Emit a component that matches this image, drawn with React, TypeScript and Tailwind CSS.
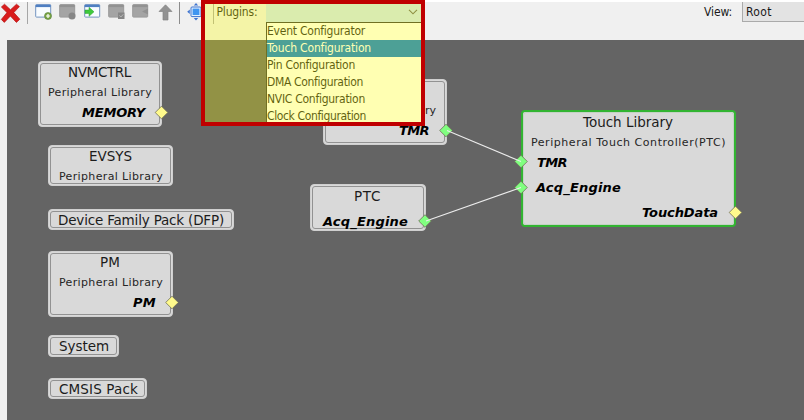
import { useLayoutEffect, useRef } from "react";

type Kind = "title" | "sub" | "port" | "ui";

const kinds: Record<Kind, string> = {
  title: "text-[13.5px] font-normal text-[#1c1c1c]",
  sub: "text-[11px] font-normal text-[#262626]",
  port: "text-[13px] font-bold italic text-black",
  ui: "text-[12px] font-normal",
};

const faces: Record<Kind, string> = {
  title: "font-['DejaVu_Sans',sans-serif]",
  sub: "font-['DejaVu_Sans',sans-serif]",
  port: "font-['DejaVu_Sans',sans-serif]",
  ui: "font-['DejaVu_Sans_Condensed','DejaVu_Sans',sans-serif] [font-stretch:condensed]",
};

/* Distance from the top of a line box to its baseline. */
const ascent: Record<Kind, number> = { title: 13, sub: 11, port: 12, ui: 12 };

/* One line of text whose tracking is adjusted so that it fills `width`. */
function Label({ kind, width, className = "", children }: { kind: Kind; width: number; className?: string; children: string }) {
  const ref = useRef<HTMLSpanElement>(null);
  useLayoutEffect(() => {
    const el = ref.current;
    if (!el) return;
    el.style.letterSpacing = "0px";
    const natural = el.getBoundingClientRect().width;
    el.style.letterSpacing = `${(width - natural) / children.length}px`;
  }, [width, children]);
  return (
    <span ref={ref} className={`block h-4 w-max whitespace-pre leading-4 ${kinds[kind]} ${faces[kind]} ${className}`}>
      {children}
    </span>
  );
}

type Line = { kind: Kind; text: string; x: number; y: number; w: number };
type Node = { x: number; y: number; w: number; h: number; active?: boolean; lines: Line[] };

/* Line coordinates: left edge and baseline on the canvas. */
const nodes: Node[] = [
  { x: 38, y: 61, w: 124, h: 66, lines: [
    { kind: "title", text: "NVMCTRL", x: 68, y: 77, w: 63 },
    { kind: "sub", text: "Peripheral Library", x: 48, y: 96, w: 104 },
    { kind: "port", text: "MEMORY", x: 82, y: 117, w: 63 } ] },
  { x: 48, y: 145, w: 125, h: 41, lines: [
    { kind: "title", text: "EVSYS", x: 89, y: 161, w: 43 },
    { kind: "sub", text: "Peripheral Library", x: 59, y: 180, w: 104 } ] },
  { x: 48, y: 209, w: 186, h: 21, lines: [{ kind: "title", text: "Device Family Pack (DFP)", x: 58, y: 225, w: 166 }] },
  { x: 48, y: 251, w: 125, h: 66, lines: [
    { kind: "title", text: "PM", x: 100, y: 267, w: 20 },
    { kind: "sub", text: "Peripheral Library", x: 59, y: 286, w: 104 },
    { kind: "port", text: "PM", x: 133, y: 307, w: 23 } ] },
  { x: 48, y: 335, w: 71, h: 22, lines: [{ kind: "title", text: "System", x: 59, y: 351, w: 50 }] },
  { x: 48, y: 378, w: 99, h: 21, lines: [{ kind: "title", text: "CMSIS Pack", x: 59, y: 394, w: 79 }] },
  { x: 323, y: 79, w: 124, h: 66, lines: [
    { kind: "sub", text: "ry", x: 425, y: 114, w: 11 },
    { kind: "port", text: "TMR", x: 399, y: 135, w: 30 } ] },
  { x: 310, y: 184, w: 116, h: 47, lines: [
    { kind: "title", text: "PTC", x: 354, y: 201, w: 27 },
    { kind: "port", text: "Acq_Engine", x: 323, y: 226, w: 85 } ] },
  { x: 521, y: 110, w: 215, h: 117, active: true, lines: [
    { kind: "title", text: "Touch Library", x: 583, y: 127, w: 90 },
    { kind: "sub", text: "Peripheral Touch Controller(PTC)", x: 531, y: 146, w: 195 },
    { kind: "port", text: "TMR", x: 537, y: 167, w: 30 },
    { kind: "port", text: "Acq_Engine", x: 536, y: 192, w: 85 },
    { kind: "port", text: "TouchData", x: 642, y: 217, w: 76 } ] },
];

const ports = [
  { x: 161.5, y: 112.5, fill: "#fffa8c" },
  { x: 172, y: 302.5, fill: "#fffa8c" },
  { x: 735.5, y: 212.5, fill: "#fffa8c" },
  { x: 446, y: 130.5, fill: "#80ff80" },
  { x: 425, y: 221, fill: "#80ff80" },
  { x: 521, y: 161.5, fill: "#80ff80" },
  { x: 521, y: 187.5, fill: "#80ff80" },
];

function NodeBox({ node }: { node: Node }) {
  return (
    <div
      className={`absolute rounded-[4px] bg-[#d9d9d9] ${node.active ? "border-2 border-[#32b432]" : "border border-[#cfcfcf]"}`}
      style={{ left: node.x, top: node.y, width: node.w, height: node.h }}
    >
      <div className={`absolute inset-0 rounded-[3px] border ${node.active ? "border-[#c4d2c4]" : "m-px border-[#929292]"}`} />
      {node.lines.map((l) => {
        const b = node.active ? 2 : 1;
        return (
          <div key={l.text} className="absolute" style={{ left: l.x - node.x - b, top: l.y - node.y - b - ascent[l.kind] }}>
            <Label kind={l.kind} width={l.w}>{l.text}</Label>
          </div>
        );
      })}
    </div>
  );
}

function WindowIcon({ gray = false, children }: { gray?: boolean; children?: React.ReactNode }) {
  return (
    <svg className="h-4 w-[18px]" viewBox="0 0 18 16">
      <rect x="0.7" y="0.7" width="15" height="12.4" rx="0.8" fill={gray ? "#a4a4a4" : "#f8fcff"} stroke={gray ? "#9a9a9a" : "#7394c0"} />
      <rect x="0.7" y="0.7" width="15" height="2.4" fill={gray ? "#929292" : "#4f7fc2"} />
      {children}
    </svg>
  );
}

function Toolbar() {
  return (
    <div className="flex h-[38px] items-start bg-[#f0f0f0] text-[#1a1a1a]">
      <svg className="mt-px h-[20px] w-[21px]" viewBox="0 0 21 20">
        <path d="M4.5 1.2 10.5 6.8 16.5 1.2 19.4 3.6 13.8 9.6 19.8 16.2 16.4 19.4 10.4 13 4.3 19.4 1.3 16.4 7 9.6 1.4 4Z" fill="#d91c1c" stroke="#b31313" strokeWidth="0.7" />
      </svg>
      <i className="ml-[6px] h-[22px] w-px bg-[#a6a6a6]" />
      <div className="ml-[7px] mt-[2px] flex gap-[6.3px]">
        <WindowIcon>
          <circle cx="13" cy="12" r="3.5" fill="#7aa544" stroke="#55803a" strokeWidth="0.6" />
          <path d="M13 10v4M11 12h4" stroke="#fff" strokeWidth="1.2" />
        </WindowIcon>
        <WindowIcon gray><circle cx="13" cy="12" r="3.5" fill="#868686" /></WindowIcon>
        <WindowIcon><path d="M1 6h4V3.3L10 7.8 5 12.3V9.5H1Z" fill="#3fc93c" stroke="#2ba22c" strokeWidth="0.5" /></WindowIcon>
        <WindowIcon gray><rect x="10" y="8.5" width="6.5" height="6.5" fill="#868686" /><path d="m11.5 11.5 1.4 1.5 2.4-2.7" stroke="#b8b8b8" fill="none" /></WindowIcon>
        <WindowIcon gray><path d="M16 4.5v6L10 7.5Z" fill="#929292" /></WindowIcon>
        <svg className="ml-[2px] h-[17px] w-[15px]" viewBox="0 0 15 17">
          <path d="M7.5 0.8 14 7.5H10V16H5V7.5H1Z" fill="#929292" stroke="#858585" strokeWidth="0.7" />
        </svg>
      </div>
      <i className="ml-[6px] h-[22px] w-px bg-[#8c8c8c]" />
      <svg className="ml-[7px] mt-px h-[18px] w-[18px]" viewBox="0 0 18 18">
        <rect x="4" y="4" width="10" height="9.6" rx="1" fill="#e4f1ff" stroke="#3e74d0" strokeWidth="1" />
        <rect x="5.6" y="5.6" width="6.8" height="6.4" fill="#4095f0" />
        <path d="M9 0 11.2 2.6H6.8ZM9 17.6 6.8 15h4.4ZM0.2 8.8 2.8 6.6V11ZM17.8 8.8 15.2 6.6V11Z" fill="#3e74d0" />
      </svg>
      <i className="ml-[8px] h-[22px] w-px bg-[#a6a6a6]" />
      <Label kind="ui" width={41} className="ml-[2px] mt-[2px]">Plugins:</Label>
      <div className="ml-[9px] flex h-5 w-[156px] items-center justify-end bg-[#cae4f9] pr-1">
        <svg className="h-[6px] w-[10px]" viewBox="0 0 10 6"><path d="m1 0.8 4 4 4-4" fill="none" stroke="#606060" strokeWidth="1.1" /></svg>
      </div>
      <div className="flex flex-1 justify-end">
        <Label kind="ui" width={28} className="mr-[10px] mt-[2px]">View:</Label>
        <div className="h-5 w-[62px] border-b border-l border-[#aaaaaa] bg-[#e3e3e3] pl-[3px] pt-[2px]">
          <Label kind="ui" width={26}>Root</Label>
        </div>
      </div>
    </div>
  );
}

const plugins: [string, number][] = [
  ["Event Configurator", 98],
  ["Touch Configuration", 104],
  ["Pin Configuration", 88],
  ["DMA Configuration", 96],
  ["NVIC Configuration", 98],
  ["Clock Configuration", 99],
];

export default function App() {
  return (
    <div className="relative flex h-[420px] w-[804px] flex-col overflow-hidden bg-[#f0f0f0]">
      <div className="h-[2px] bg-white" />
      <Toolbar />
      <div className="ml-[7px] flex-1 bg-[#646464]" />
      <div className="absolute inset-0">
        {nodes.map((n) => <NodeBox key={`${n.x}-${n.y}`} node={n} />)}
        <svg className="absolute inset-0 h-[420px] w-[804px]" viewBox="0 0 804 420">
          {ports.map((p) => (
            <path key={`${p.x}-${p.y}`} d={`M${p.x - 6.3} ${p.y}l6.3-6.3 6.3 6.3-6.3 6.3Z`} fill={p.fill} stroke="#6e6e58" strokeWidth="0.8" />
          ))}
          <path d="M447 130.5 521 161.5M426 221 521 187.5" stroke="#ececec" strokeWidth="1.1" />
        </svg>
      </div>
      <div className="absolute left-[266px] top-[22px] flex w-[156px] flex-col border-l border-t border-[#333] bg-white text-[#1a1a1a]">
        {plugins.map(([name, w], i) => (
          <div key={name} className={`flex h-[17px] items-start ${i === 1 ? "bg-[#0078d7] text-white" : ""}`}>
            <Label kind="ui" width={w}>{name}</Label>
          </div>
        ))}
      </div>
      <div className="absolute left-[201px] top-0 h-[126px] w-[224px] border-4 border-[#c00000] bg-[#ffff00]/30" />
    </div>
  );
}
